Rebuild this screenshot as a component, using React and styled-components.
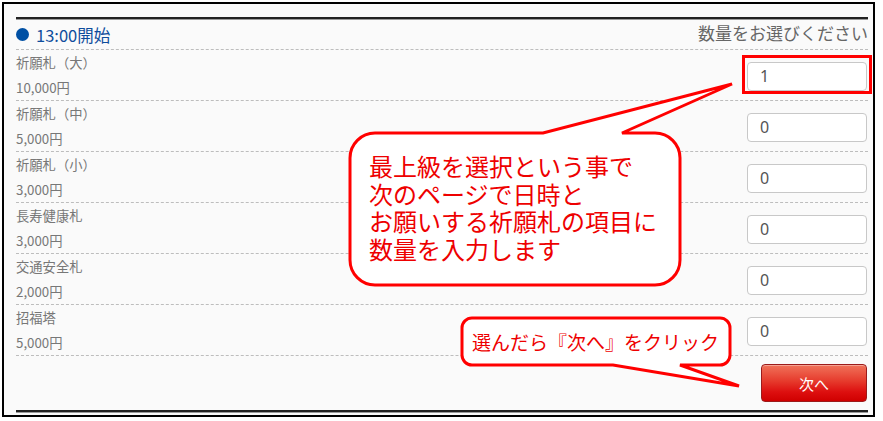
import React from "react";
import styled, { createGlobalStyle } from "styled-components";

const GlobalStyle = createGlobalStyle`
  html, body { margin: 0; padding: 0; background: #fff; }
  body { font-family: "Noto Sans CJK JP", "Noto Sans", sans-serif; }
  * { box-sizing: border-box; }
`;

const Frame = styled.div`
  position: relative;
  margin: 2px 0 0 2px;
  width: 873px;
  height: 415px;
  border: 2px solid #000;
  background: #fafafa;
  padding: 13px 5px 0 12px;
`;

const Panel = styled.div`
  border-top: 2px solid #222;
`;

const Header = styled.div`
  display: flex;
  align-items: center;
  justify-content: space-between;
  height: 31px;
  border-top: 1px solid #9a9a9a;
  border-bottom: 1px dashed #bdbdbd;
`;

const Title = styled.div`
  display: flex;
  align-items: center;
  gap: 7px;
  color: #0e4d9c;
  font-size: 16.5px;
  line-height: 20px;
`;

const Dot = styled.span`
  width: 13px;
  height: 13px;
  border-radius: 50%;
  background: #0050a4;
`;

const Note = styled.div`
  color: #666;
  font-size: 17px;
  line-height: 20px;
  margin-top: -3px;
`;

const Row = styled.div`
  display: flex;
  align-items: center;
  justify-content: space-between;
  height: 51px;
  border-bottom: 1px dashed #bdbdbd;
`;

const Info = styled.div`
  display: flex;
  flex-direction: column;
  color: #777;
  font-size: 13.3px;
  line-height: 25px;
`;

const QtyBox = styled.div`
  position: relative;
  margin: 2px 1px 0 0;
`;

const QtyInput = styled.input`
  display: block;
  width: 120px;
  height: 29px;
  border: 1px solid #c8c8c8;
  border-radius: 4px;
  background: #fff;
  padding: 0 12px;
  font-family: "Noto Sans", "Noto Sans CJK JP", sans-serif;
  font-size: 16px;
  color: #555;
  outline: none;
`;

const Highlight = styled.span`
  position: absolute;
  left: -5px;
  right: -5px;
  top: -7px;
  bottom: -3px;
  border: 3px solid #f00;
  pointer-events: none;
`;

const Footer = styled.div`
  display: flex;
  justify-content: flex-end;
  padding: 8px 1px 8px 0;
  border-bottom: 2px solid #222;
  box-shadow: 0 1px 0 #9a9a9a;
`;

const NextButton = styled.button`
  width: 106px;
  height: 38px;
  border: 1px solid #9c1b1b;
  border-radius: 4px;
  background: linear-gradient(#f0735a 0%, #e63a2c 45%, #dd0f0f 75%, #d00000 100%);
  box-shadow: inset 0 1px 0 rgba(255, 255, 255, 0.35);
  color: #fff;
  font-family: "Noto Sans CJK JP", sans-serif;
  font-size: 15px;
`;

const CalloutLayer = styled.svg`
  position: absolute;
  left: -4px;
  top: -4px;
  pointer-events: none;
`;

const CalloutText = styled.div`
  position: absolute;
  left: ${(p) => p.$x - 4}px;
  top: ${(p) => p.$y - 4}px;
  color: #ee0000;
  font-size: ${(p) => p.$size}px;
  line-height: ${(p) => p.$lh}px;
  white-space: pre;
  font-family: "Noto Sans CJK JP", sans-serif;
`;

const items = [
  { name: "祈願札（大）", price: "10,000円", qty: "1", selected: true },
  { name: "祈願札（中）", price: "5,000円", qty: "0" },
  { name: "祈願札（小）", price: "3,000円", qty: "0" },
  { name: "長寿健康札", price: "3,000円", qty: "0" },
  { name: "交通安全札", price: "2,000円", qty: "0" },
  { name: "招福塔", price: "5,000円", qty: "0" },
];

const bigPath =
  "M375,133 L543,133 L732,84 L622,133 L655,133 A25,25 0 0 1 680,158 L680,260 A25,25 0 0 1 655,285 L375,285 A25,25 0 0 1 350,260 L350,158 A25,25 0 0 1 375,133 Z";
const smallPath =
  "M472,318 L720,318 A10,10 0 0 1 730,328 L730,355 A10,10 0 0 1 720,365 L680,365 L739,386 L613,365 L472,365 A10,10 0 0 1 462,355 L462,328 A10,10 0 0 1 472,318 Z";

export default function App() {
  return (
    <>
      <GlobalStyle />
      <Frame>
        <Panel>
          <Header>
            <Title>
              <Dot />
              13:00開始
            </Title>
            <Note>数量をお選びください</Note>
          </Header>
          {items.map((it) => (
            <Row key={it.name}>
              <Info>
                <span>{it.name}</span>
                <span>{it.price}</span>
              </Info>
              <QtyBox>
                <QtyInput type="text" defaultValue={it.qty} readOnly />
                {it.selected && <Highlight />}
              </QtyBox>
            </Row>
          ))}
          <Footer>
            <NextButton type="button">次へ</NextButton>
          </Footer>
        </Panel>

        <CalloutLayer width="883" height="421" viewBox="0 0 883 421">
          <path d={bigPath} fill="#fff" stroke="#f00" strokeWidth="3" strokeLinejoin="miter" />
          <path d={smallPath} fill="#fff" stroke="#f00" strokeWidth="3" strokeLinejoin="miter" />
        </CalloutLayer>
        <CalloutText $x={369} $y={152} $size={24} $lh={27.5}>
          {"最上級を選択という事で\n次のページで日時と\nお願いする祈願札の項目に\n数量を入力します"}
        </CalloutText>
        <CalloutText $x={472} $y={330} $size={19} $lh={24}>
          選んだら『次へ』をクリック
        </CalloutText>
      </Frame>
    </>
  );
}
